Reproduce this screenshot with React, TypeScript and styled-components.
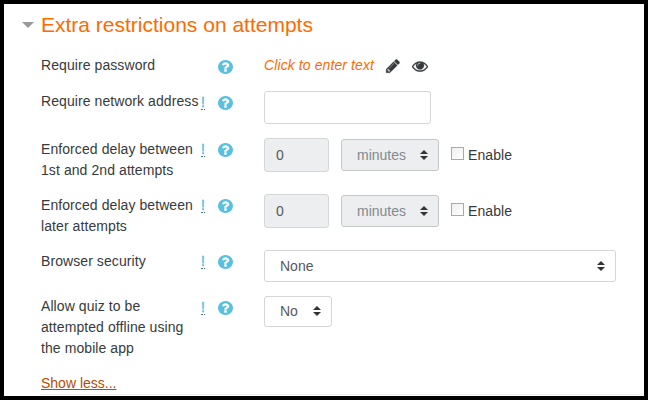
import React from "react";
import styled, { createGlobalStyle } from "styled-components";

const GlobalStyle = createGlobalStyle`
  * { box-sizing: border-box; }
  body { margin: 0; background: #fff; }
`;

const Panel = styled.section`
  display: flex;
  flex-direction: column;
  width: 648px;
  height: 400px;
  padding: 7px 28px 0 17px;
  border: 4px solid #000;
  background: #fff;
  color: #373a3c;
  font: 14px/21px "Liberation Sans", Arial, sans-serif;
  overflow: hidden;
`;

const Header = styled.header`
  display: flex;
  align-items: center;
  height: 27px;
`;

const Caret = styled.span`
  width: 0;
  margin: 1px 7px 0 1px;
  border: 6px solid transparent;
  border-top-color: #999;
  border-bottom: 0;
`;

const Title = styled.h3`
  margin: 0;
  color: #ff6a00;
  font-size: 21px;
  font-weight: 400;
  line-height: 27px;
  white-space: nowrap;
`;

const Row = styled.div<{ $height: number }>`
  display: grid;
  grid-template-columns: 159px 64px 1fr;
  height: ${(p) => p.$height}px;
  padding-left: 20px;
  flex-shrink: 0;
`;

const Rows = styled.div`
  padding-top: 16px;
`;

const Label = styled.label<{ $top: number }>`
  padding-top: ${(p) => p.$top}px;
  letter-spacing: 0.08px;
  white-space: pre;
`;

const Marks = styled.div<{ $top: number }>`
  display: flex;
  align-items: flex-start;
  width: 33px;
  padding: ${(p) => p.$top}px 0 0 1px;
`;

const Advanced = styled.abbr`
  width: 4px;
  height: 18px;
  margin-top: 1px;
  color: #5bc0de;
  line-height: 21px;
  -webkit-text-stroke: 0.4px #5bc0de;
  text-decoration: none;
  border-bottom: 1px dotted #47788a;
`;

const Help = styled.svg`
  width: 15px;
  height: 14px;
  margin-top: 5px;
  margin-left: auto;
  fill: #5bc0de;
`;

const Controls = styled.div`
  display: flex;
  align-items: flex-start;
`;

const Placeholder = styled.em`
  padding-top: 1px;
  color: #ff6a00;
  letter-spacing: 0.1px;
  white-space: nowrap;
`;

const Glyph = styled.svg`
  width: 16px;
  height: 16px;
  margin: 4px 0 0 11px;
  fill: #373a3c;
  stroke: #373a3c;
  stroke-width: 30px;
`;

const TextBox = styled.input<{ $width: number }>`
  width: ${(p) => p.$width}px;
  height: ${(p) => (p.disabled ? 34 : 33)}px;
  margin: 0;
  padding: 0 11px;
  border: 1px solid #d5d6d7;
  border-radius: 3px;
  background: ${(p) => (p.disabled ? "#eceeef" : "#fff")};
  color: #55595c;
  font: inherit;
`;

const SelectBox = styled.div<{ $width: number; $height: number; $disabled?: boolean }>`
  display: flex;
  align-items: center;
  justify-content: space-between;
  width: ${(p) => p.$width}px;
  height: ${(p) => p.$height}px;
  margin: ${(p) => (p.$disabled ? "1px 0 0 12px" : "0")};
  padding: 0 10px 0 15px;
  border: 1px solid ${(p) => (p.$disabled ? "#c4c6c8" : "#d5d6d7")};
  border-radius: 3px;
  background: ${(p) => (p.$disabled ? "#eceeef" : "#fff")};
  color: ${(p) => (p.$disabled ? "#818a91" : "#55595c")};
`;

const Arrows = styled.svg`
  width: 8px;
  height: 10px;
  margin-bottom: 1px;
  fill: #333;
`;

const EnableLabel = styled.label`
  display: flex;
  align-items: center;
  gap: 4px;
  height: 34px;
  margin-left: 12px;
  letter-spacing: 0.08px;
`;

const CheckBox = styled.input`
  appearance: none;
  width: 13px;
  height: 13px;
  margin: 0 0 3px;
  border: 1px solid #aaa;
  background: linear-gradient(135deg, #eee, #fff);
`;

const ShowLess = styled.a`
  align-self: flex-start;
  margin: 0 0 0 20px;
  color: #b84c00;
  line-height: 21px;
  text-decoration: underline;
`;

const Divider = styled.hr`
  width: 603px;
  height: 1px;
  margin: 0 0 0 20px;
  border: 0;
  background: #eceeef;
  flex-shrink: 0;
`;

const HelpIcon = () => (
  <Help viewBox="128 128 1536 1536" preserveAspectRatio="none">
    <path d="M1024 1376v-192q0-14-9-23t-23-9h-192q-14 0-23 9t-9 23v192q0 14 9 23t23 9h192q14 0 23-9t9-23zm256-672q0-88-55.5-163t-138.5-116-170-41q-243 0-371 213-15 24 8 42l132 100q7 6 19 6 16 0 25-12 53-68 86-92 34-24 86-24 48 0 85.5 26t37.5 59q0 38-20 61t-68 45q-63 28-115.5 86.5t-52.5 125.5v36q0 14 9 23t23 9h192q14 0 23-9t9-23q0-19 21.5-49.5t54.5-49.5q32-18 49-28.5t46-35 44.5-48 28-60.5 12.5-81zm384 192q0 209-103 385.5t-279.5 279.5-385.5 103-385.5-103-279.5-279.5-103-385.5 103-385.5 279.5-279.5 385.5-103 385.5 103 279.5 279.5 103 385.5z" />
  </Help>
);

const PencilIcon = () => (
  <Glyph viewBox="0 0 1792 1792">
    <path d="M491 1536l91-91-235-235-91 91v107h128v128h107zm523-928q0-22-22-22-10 0-17 7l-542 542q-7 7-7 17 0 22 22 22 10 0 17-7l542-542q7-7 7-17zm-54-192l416 416-832 832h-416v-416zm683 96q0 53-37 90l-166 166-416-416 166-165q36-38 90-38 53 0 91 38l235 234q37 39 37 91z" />
  </Glyph>
);

const EyeIcon = () => (
  <Glyph viewBox="0 0 1792 1792">
    <path d="M1664 960q-152-236-381-353 61 104 61 225 0 185-131.5 316.5t-316.5 131.5-316.5-131.5-131.5-316.5q0-121 61-225-229 117-381 353 133 205 333.5 326.5t434.5 121.5 434.5-121.5 333.5-326.5zm-720-384q0-20-14-34t-34-14q-125 0-214.5 89.5t-89.5 214.5q0 20 14 34t34 14 34-14 14-34q0-86 61-147t147-61q20 0 34-14t14-34zm848 384q0 34-20 69-140 230-376.5 368.5t-499.5 138.5-499.5-139-376.5-368q-20-35-20-69t20-69q140-229 376.5-368t499.5-139 499.5 139 376.5 368q20 35 20 69z" />
  </Glyph>
);

type FieldProps = {
  label: string;
  height: number;
  labelTop?: number;
  advanced?: boolean;
  children: React.ReactNode;
};

const Field = ({ label, height, labelTop = 1, advanced = true, children }: FieldProps) => (
  <Row $height={height}>
    <Label $top={labelTop}>{label}</Label>
    <Marks $top={advanced ? 0 : 1}>
      {advanced && <Advanced>!</Advanced>}
      <HelpIcon />
    </Marks>
    <Controls>{children}</Controls>
  </Row>
);

type SelectProps = { value: string; width: number; height: number; disabled?: boolean };

const Select = ({ value, width, height, disabled }: SelectProps) => (
  <SelectBox $width={width} $height={height} $disabled={disabled}>
    <span>{value}</span>
    <Arrows viewBox="0 0 8 10">
      <path d="M4 0L8 4H0zM0 6H8L4 10z" />
    </Arrows>
  </SelectBox>
);

const Duration = () => (
  <>
    <TextBox $width={65} disabled defaultValue="0" />
    <Select value="minutes" width={98} height={32} disabled />
    <EnableLabel>
      <CheckBox type="checkbox" />
      Enable
    </EnableLabel>
  </>
);

export default function App() {
  return (
    <>
      <GlobalStyle />
      <Panel>
        <Header>
          <Caret />
          <Title>Extra restrictions on attempts</Title>
        </Header>
        <Rows>
          <Field label="Require password" height={37} advanced={false}>
            <Placeholder>Click to enter text</Placeholder>
            <PencilIcon />
            <EyeIcon />
          </Field>
          <Field label="Require network address" height={47} labelTop={0}>
            <TextBox $width={167} />
          </Field>
          <Field label={"Enforced delay between\n1st and 2nd attempts"} height={56}>
            <Duration />
          </Field>
          <Field label={"Enforced delay between\nlater attempts"} height={56}>
            <Duration />
          </Field>
          <Field label="Browser security" height={46}>
            <Select value="None" width={352} height={32} />
          </Field>
          <Field label={"Allow quiz to be\nattempted offline using\nthe mobile app"} height={77} labelTop={0}>
            <Select value="No" width={68} height={31} />
          </Field>
        </Rows>
        <ShowLess>Show less...</ShowLess>
        <Divider />
      </Panel>
    </>
  );
}
